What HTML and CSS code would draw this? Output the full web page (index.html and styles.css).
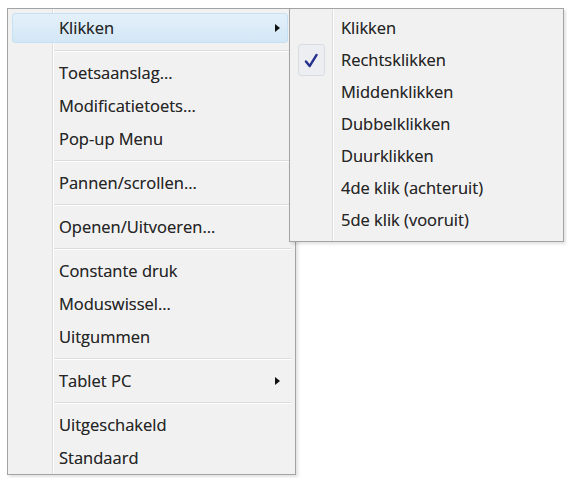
FILE: index.html
```html
<!DOCTYPE html>
<html>
<head>
<meta charset="utf-8">
<link rel="stylesheet" href="styles.css">
</head>
<body>
<div class="stage">
  <div class="menu main">
    <div class="item hl"><span class="label">Klikken</span><span class="arrow"></span></div>
    <div class="sep"></div>
    <div class="item"><span class="label">Toetsaanslag...</span></div>
    <div class="item"><span class="label">Modificatietoets...</span></div>
    <div class="item"><span class="label">Pop-up Menu</span></div>
    <div class="sep"></div>
    <div class="item"><span class="label">Pannen/scrollen...</span></div>
    <div class="sep"></div>
    <div class="item"><span class="label">Openen/Uitvoeren...</span></div>
    <div class="sep"></div>
    <div class="item"><span class="label">Constante druk</span></div>
    <div class="item"><span class="label">Moduswissel...</span></div>
    <div class="item"><span class="label">Uitgummen</span></div>
    <div class="sep"></div>
    <div class="item"><span class="label">Tablet PC</span><span class="arrow"></span></div>
    <div class="sep"></div>
    <div class="item"><span class="label">Uitgeschakeld</span></div>
    <div class="item"><span class="label">Standaard</span></div>
  </div>
  <div class="menu sub">
    <div class="sitem"><span class="label">Klikken</span></div>
    <div class="sitem checked">
      <span class="checkbox">
        <svg width="27" height="32" viewBox="0 0 27 32"><path d="M7.5 16.5 L11.5 21.5 L19 9.5" fill="none" stroke="#26308f" stroke-width="2.6" stroke-linecap="round" stroke-linejoin="round"/></svg>
      </span>
      <span class="label">Rechtsklikken</span>
    </div>
    <div class="sitem"><span class="label">Middenklikken</span></div>
    <div class="sitem"><span class="label">Dubbelklikken</span></div>
    <div class="sitem"><span class="label">Duurklikken</span></div>
    <div class="sitem"><span class="label">4de klik (achteruit)</span></div>
    <div class="sitem"><span class="label">5de klik (vooruit)</span></div>
  </div>
</div>
</body>
</html>
```

FILE: styles.css
```css
html, body {
  margin: 0;
  padding: 0;
  background: #ffffff;
}

body {
  font-family: "Open Sans", "Noto Sans", "DejaVu Sans", sans-serif;
  font-size: 16.5px;
  color: #262626;
}

.stage {
  position: relative;
  width: 567px;
  height: 478px;
  padding: 8px 0 0 7px;
  box-sizing: border-box;
}

.menu {
  box-sizing: border-box;
  border: 1px solid #a3a3a3;
  background-color: #f1f1f1;
  box-shadow: 2px 2px 3px rgba(0, 0, 0, 0.12);
}

.main {
  width: 289px;
  height: 467px;
  padding: 3px 0 0 0;
  background-image: linear-gradient(to right, transparent 44px, #dedede 44px, #dedede 45px, #ffffff 45px, #ffffff 46px, transparent 46px);
}

.item {
  height: 33px;
  display: flex;
  align-items: center;
  padding: 0 15px 0 51px;
  box-sizing: border-box;
}

.item.hl {
  height: 30px;
  margin: 1px 7px 2px 4px;
  padding: 0 7px 0 46px;
  border: 1px solid #c6e1f3;
  border-radius: 3px;
  background: linear-gradient(#e3f0fa, #d3e7f6);
}

.label {
  flex: 1;
  white-space: nowrap;
  line-height: 20px;
  text-shadow: 0 0 0.5px rgba(0, 0, 0, 0.45);
}

.arrow {
  width: 0;
  height: 0;
  border-top: 4px solid transparent;
  border-bottom: 4px solid transparent;
  border-left: 5px solid #111111;
}

.sep {
  height: 11px;
  margin-left: 46px;
  margin-right: 4px;
  background-image: linear-gradient(to bottom, transparent 5px, #dcdcdc 5px, #dcdcdc 6px, #ffffff 6px, #ffffff 7px, transparent 7px);
}

.sub {
  position: absolute;
  left: 289px;
  top: 8px;
  width: 275px;
  height: 234px;
  padding: 3px 0 0 0;
  background-image: linear-gradient(to right, transparent 42px, #dedede 42px, #dedede 43px, #ffffff 43px, #ffffff 44px, transparent 44px);
}

.sitem {
  height: 32px;
  display: flex;
  align-items: center;
  padding: 0 10px 0 51px;
  box-sizing: border-box;
  position: relative;
}

.checkbox {
  position: absolute;
  left: 8px;
  top: 0;
  width: 27px;
  height: 32px;
  box-sizing: border-box;
  border: 1px solid #d9dde3;
  border-radius: 3px;
  background: #eceef1;
  display: flex;
}
```
